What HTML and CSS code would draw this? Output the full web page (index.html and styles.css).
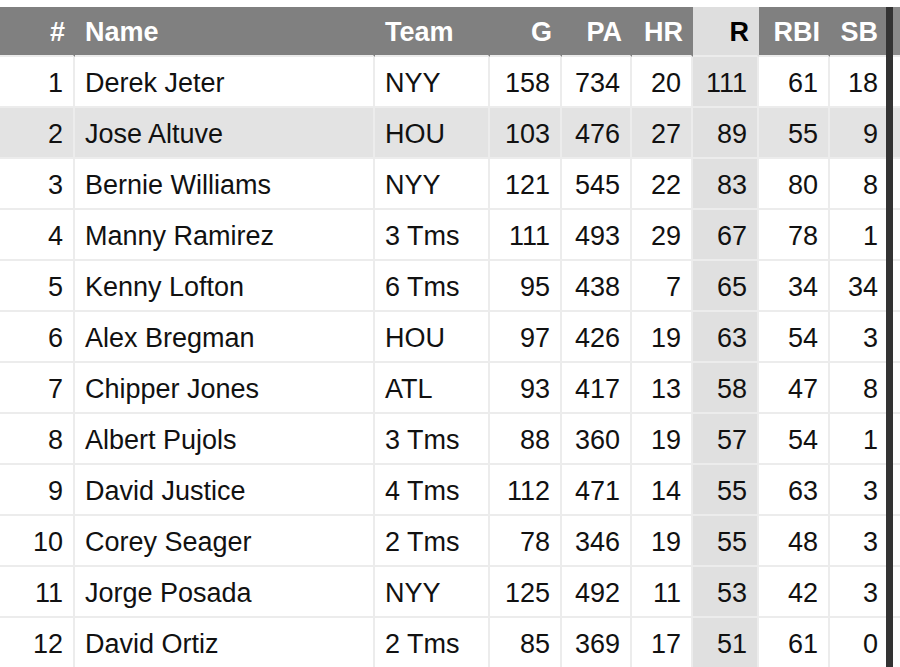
FILE: index.html
```html
<!DOCTYPE html>
<html lang="en">
<head>
<meta charset="utf-8">
<title>Batting leaders</title>
<link rel="stylesheet" href="styles.css">
</head>
<body>
<div class="wrap">
  <div class="grid" role="table">
    <div class="row head" role="row">
      <div class="c num">#</div>
      <div class="c left">Name</div>
      <div class="c left">Team</div>
      <div class="c num">G</div>
      <div class="c num">PA</div>
      <div class="c num">HR</div>
      <div class="c num sorted">R</div>
      <div class="c num">RBI</div>
      <div class="c num last">SB</div>
      <div class="c bar"></div>
      <div class="c stub"></div>
    </div>
    <div class="row" role="row"><div class="c num">1</div><div class="c left">Derek Jeter</div><div class="c left">NYY</div><div class="c num">158</div><div class="c num">734</div><div class="c num">20</div><div class="c num sorted">111</div><div class="c num">61</div><div class="c num last">18</div><div class="c bar"></div><div class="c stub"></div></div>
    <div class="row hover" role="row"><div class="c num">2</div><div class="c left">Jose Altuve</div><div class="c left">HOU</div><div class="c num">103</div><div class="c num">476</div><div class="c num">27</div><div class="c num sorted">89</div><div class="c num">55</div><div class="c num last">9</div><div class="c bar"></div><div class="c stub"></div></div>
    <div class="row" role="row"><div class="c num">3</div><div class="c left">Bernie Williams</div><div class="c left">NYY</div><div class="c num">121</div><div class="c num">545</div><div class="c num">22</div><div class="c num sorted">83</div><div class="c num">80</div><div class="c num last">8</div><div class="c bar"></div><div class="c stub"></div></div>
    <div class="row" role="row"><div class="c num">4</div><div class="c left">Manny Ramirez</div><div class="c left">3 Tms</div><div class="c num">111</div><div class="c num">493</div><div class="c num">29</div><div class="c num sorted">67</div><div class="c num">78</div><div class="c num last">1</div><div class="c bar"></div><div class="c stub"></div></div>
    <div class="row" role="row"><div class="c num">5</div><div class="c left">Kenny Lofton</div><div class="c left">6 Tms</div><div class="c num">95</div><div class="c num">438</div><div class="c num">7</div><div class="c num sorted">65</div><div class="c num">34</div><div class="c num last">34</div><div class="c bar"></div><div class="c stub"></div></div>
    <div class="row" role="row"><div class="c num">6</div><div class="c left">Alex Bregman</div><div class="c left">HOU</div><div class="c num">97</div><div class="c num">426</div><div class="c num">19</div><div class="c num sorted">63</div><div class="c num">54</div><div class="c num last">3</div><div class="c bar"></div><div class="c stub"></div></div>
    <div class="row" role="row"><div class="c num">7</div><div class="c left">Chipper Jones</div><div class="c left">ATL</div><div class="c num">93</div><div class="c num">417</div><div class="c num">13</div><div class="c num sorted">58</div><div class="c num">47</div><div class="c num last">8</div><div class="c bar"></div><div class="c stub"></div></div>
    <div class="row" role="row"><div class="c num">8</div><div class="c left">Albert Pujols</div><div class="c left">3 Tms</div><div class="c num">88</div><div class="c num">360</div><div class="c num">19</div><div class="c num sorted">57</div><div class="c num">54</div><div class="c num last">1</div><div class="c bar"></div><div class="c stub"></div></div>
    <div class="row" role="row"><div class="c num">9</div><div class="c left">David Justice</div><div class="c left">4 Tms</div><div class="c num">112</div><div class="c num">471</div><div class="c num">14</div><div class="c num sorted">55</div><div class="c num">63</div><div class="c num last">3</div><div class="c bar"></div><div class="c stub"></div></div>
    <div class="row" role="row"><div class="c num">10</div><div class="c left">Corey Seager</div><div class="c left">2 Tms</div><div class="c num">78</div><div class="c num">346</div><div class="c num">19</div><div class="c num sorted">55</div><div class="c num">48</div><div class="c num last">3</div><div class="c bar"></div><div class="c stub"></div></div>
    <div class="row" role="row"><div class="c num">11</div><div class="c left">Jorge Posada</div><div class="c left">NYY</div><div class="c num">125</div><div class="c num">492</div><div class="c num">11</div><div class="c num sorted">53</div><div class="c num">42</div><div class="c num last">3</div><div class="c bar"></div><div class="c stub"></div></div>
    <div class="row" role="row"><div class="c num">12</div><div class="c left">David Ortiz</div><div class="c left">2 Tms</div><div class="c num">85</div><div class="c num">369</div><div class="c num">17</div><div class="c num sorted">51</div><div class="c num">61</div><div class="c num last">0</div><div class="c bar"></div><div class="c stub"></div></div>
  </div>
</div>
</body>
</html>
```

FILE: styles.css
```css
* { box-sizing: border-box; }
html, body {
  margin: 0;
  padding: 0;
  background: #fff;
}
body {
  font-family: "Liberation Sans", Arial, Helvetica, sans-serif;
  color: #111;
  overflow: hidden;
}
.wrap {
  padding-top: 7px;
  width: 900px;
}
.grid {
  display: flex;
  flex-direction: column;
}
.row {
  display: grid;
  grid-template-columns: 75px 300px 115px 72px 70px 61px 66px 71px 56px 7px 7px;
  height: 51px;
  font-size: 27px;
  background: #fff;
}
.row.head {
  height: 50px;
  background: #808080;
  color: #fff;
  font-weight: bold;
}
.row.hover {
  background: #e3e3e3;
}
.c {
  display: flex;
  align-items: center;
  padding: 4px 9px 0;
  border-right: 2px solid #ececec;
  border-bottom: 2px solid #ececec;
  white-space: nowrap;
  overflow: hidden;
}
.c.num { justify-content: flex-end; padding-right: 10px; }
.c.left { justify-content: flex-start; padding-left: 10px; }
.head .c { border-right-color: #808080; border-bottom-color: #ececec; padding-top: 2px; }
.head .c.num { padding-right: 8px; }
.c.sorted { background: #e0e0e0; }
.head .c.sorted { background: #dedede; color: #000; border-right-color: #dedede; }
.c.last { border-right: none; padding-right: 8px; }
.c.bar {
  background: #333;
  border: none;
  padding: 0;
}
.c.stub {
  padding: 0;
  border-right: none;
}
.head .c.stub { background: #8a8a8a; }
```
